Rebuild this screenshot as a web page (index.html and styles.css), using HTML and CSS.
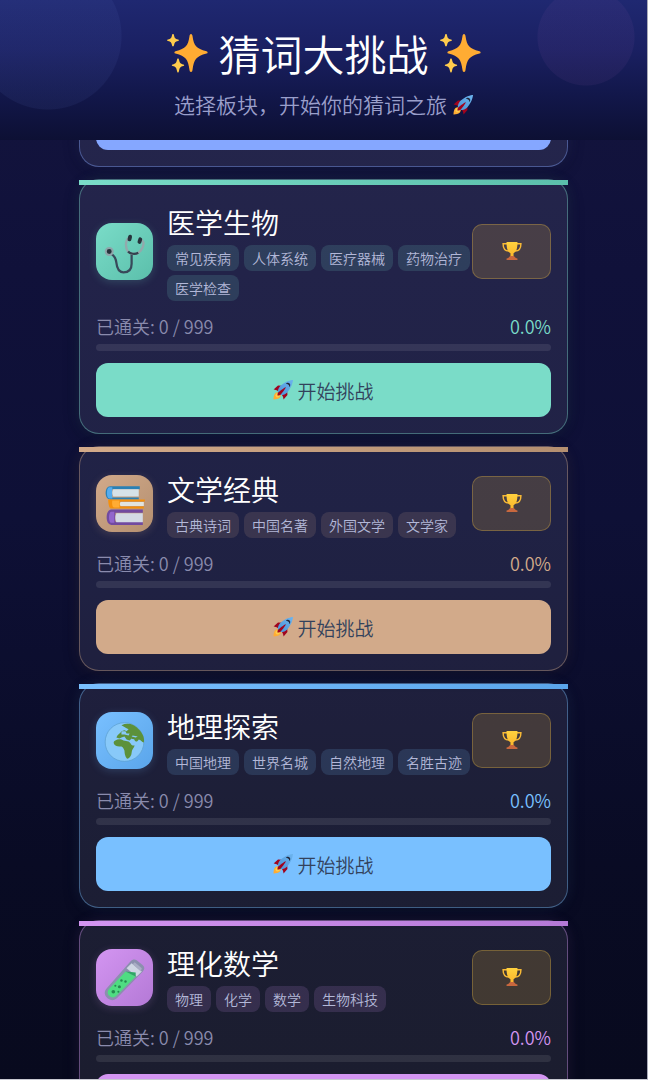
FILE: index.html
```html
<!DOCTYPE html>
<html lang="zh-CN">
<head>
<meta charset="utf-8">
<meta name="viewport" content="width=device-width, initial-scale=1">
<title>猜词大挑战</title>
<link rel="stylesheet" href="styles.css">
</head>
<body>
<svg class="sprite" aria-hidden="true">
  <defs>
    <linearGradient id="cup" x1="0" y1="0" x2="0" y2="1"><stop offset="0" stop-color="#ffd23e"/><stop offset="1" stop-color="#fbb62c"/></linearGradient>
    <linearGradient id="hull" x1="0" y1="1" x2="1" y2="0"><stop offset="0" stop-color="#4a94d8"/><stop offset="1" stop-color="#6db4ee"/></linearGradient>
    <symbol id="sparkles" viewBox="0 0 42 42">
      <path fill="#ffac33" d="M25 2c1 0 1.300 1 1.500 2 1.500 10 3.500 12.500 14 15.200 1.500.4 1.500 2 0 2.400-10.500 2.700-12.500 6-14 16.400-.2 1-.5 2-1.500 2s-1.300-1-1.500-2c-1.500-10.400-3.500-13.700-14-16.400-1.500-.4-1.500-2 0-2.400C20 16.500 22 14 23.500 4c.2-1 .5-2 1.500-2z"/>
      <path fill="#ffcc4d" d="M7 2c.6 0 .8.500 1 1.200.6 2.800 1.200 3.500 4 4.200 1.200.3 1.200 1.300 0 1.600-2.800.7-3.400 1.500-4 4.200-.2.700-.4 1.200-1 1.200s-.8-.5-1-1.200c-.6-2.700-1.200-3.500-4-4.200-1.200-.3-1.200-1.300 0-1.600 2.800-.7 3.400-1.400 4-4.200.2-.7.400-1.200 1-1.200zM12 26.500c.6 0 .8.500 1 1.300.7 3.200 1.400 4 4.300 4.700 1.200.3 1.200 1.300 0 1.600-2.900.7-3.600 1.600-4.300 4.900-.2.900-.4 1.500-1 1.500s-.8-.6-1-1.500c-.7-3.300-1.400-4.200-4.300-4.900-1.200-.3-1.200-1.300 0-1.600 2.900-.7 3.600-1.500 4.300-4.700.2-.8.400-1.300 1-1.300z"/>
    </symbol>
    <symbol id="rocket" viewBox="0 0 36 36">
      <path fill="#a0041e" d="M1 17l8-7 16 1 1 16-7 8s.001-5.999-6-12-12-6-12-6z"/>
      <path fill="#ffac33" d="M.973 35s-.036-7.979 2.985-11S15 21.187 15 21.187 14.999 29 11.999 32c-3 3-11.026 3-11.026 3z"/>
      <circle fill="#ffcc4d" cx="8.500" cy="27.500" r="4"/>
      <path fill="url(#hull)" d="M35.999 0s-10 0-22 10c-6 5-6 14-4 16s11 2 16-4c10-12 10-22 10-22z"/>
      <path fill="#23283c" d="M26.999 5c-1.623 0-3.013.971-3.641 2.360.502-.227 1.055-.36 1.641-.36 2.209 0 4 1.791 4 4 0 .586-.133 1.139-.359 1.640 1.389-.627 2.359-2.017 2.359-3.640 0-2.209-1.791-4-4-4z"/>
      <path fill="#a0041e" d="M8 28s0-4 1-5 13.001-10.999 14-10-9.001 13-10.001 14S8 28 8 28z"/>
    </symbol>
    <symbol id="trophy" viewBox="0 0 22 22">
      <path fill="none" stroke="#f7b936" stroke-width="1.600" d="M6 3H1.200c0 4.500 1 8 6.300 8M16 3h4.800c0 4.500-1 8-6.300 8"/>
      <path fill="url(#cup)" d="M5 1h12c0 7-1 10.500-4.300 12.500v3.500H9.300v-3.500C6 11.500 5 8 5 1z"/>
      <path fill="#c8683e" d="M9 16.500h4l2.200 2.300 1.800.4V21H5v-1.800l1.800-.4z"/>
    </symbol>
  </defs>
</svg>

<div class="app">
  <header class="hero">
    <h1 class="hero-title">
      <svg class="sparkle"><use href="#sparkles"/></svg>
      <span>猜词大挑战</span>
      <svg class="sparkle"><use href="#sparkles"/></svg>
    </h1>
    <p class="hero-sub"><span>选择板块，开始你的猜词之旅</span><svg class="rocket"><use href="#rocket"/></svg></p>
  </header>

  <main class="list">
    <section class="card card-scrolled">
      <button class="start" type="button" aria-label="开始挑战"></button>
    </section>

    <section class="card medical">
      <div class="card-head">
        <div class="badge">
          <svg viewBox="0 0 56 56" fill="none">
            <path stroke="#38495a" stroke-width="2.200" d="M15.500 31c3 1.500 4 4 4.500 8 .5 5 2 9.500 7 9.500 6 0 8-3.500 8-8.500V30"/>
            <path stroke="#93a9ac" stroke-width="2.200" d="M32 14.500c-3.500 3-3.500 11 .5 14.500 4 2.500 9 1.500 11.500-2 3-4 3.500-8 1-10.500"/>
            <path stroke="#34424e" stroke-width="2.200" d="M31.500 28c2 2.500 7 3 10 1.200"/>
            <path stroke="#26333b" stroke-width="3.800" stroke-linecap="round" d="M33.500 13.500l-.6 2.600M43.500 16l-.8 2.600"/>
            <circle cx="13" cy="28" r="3.400" fill="#26333b" stroke="#8fa5aa" stroke-width="2"/>
          </svg>
        </div>
        <div class="info">
          <h2>医学生物</h2>
          <ul class="tags"><li>常见疾病</li><li>人体系统</li><li>医疗器械</li><li>药物治疗</li><li>医学检查</li></ul>
        </div>
        <button class="rank" type="button" aria-label="排行榜"><svg><use href="#trophy"/></svg></button>
      </div>
      <div class="stats"><span>已通关: 0 / 999</span><span class="percent">0.0%</span></div>
      <div class="track"></div>
      <button class="start" type="button"><svg class="rocket"><use href="#rocket"/></svg>开始挑战</button>
    </section>

    <section class="card literature">
      <div class="card-head">
        <div class="badge">
          <svg viewBox="0 0 56 56">
            <path fill="#2980b5" d="M14 11h29v3H15v8h27v2H14c-6 0-6-13 0-13z"/>
            <path fill="#55acee" d="M13 12h3v11h-3c-3 0-3-11 0-11z"/>
            <path fill="#d6e2e8" d="M17 14h25v7H17q-2-3.500 0-7z"/>
            <path fill="#f4900c" d="M12 24h36v2H24v5h23v2H15c-3 0-3-9-3-9z"/>
            <path fill="#ffac33" d="M16 25h7v7h-5c-3 0-2-7-2-7z"/>
            <path fill="#e1e4df" d="M24 26.500h23v4H24q-1.500-2 0-4z"/>
            <path fill="#714aa0" d="M15 34h31v3H19v9h27v3H15c-6 0-6-15 0-15z"/>
            <path fill="#9266cc" d="M15 36h3v11h-3c-3 0-3-11 0-11z"/>
            <path fill="#d3dae5" d="M20 37.500h26v9H20q-2-4.500 0-9z"/>
          </svg>
        </div>
        <div class="info">
          <h2>文学经典</h2>
          <ul class="tags"><li>古典诗词</li><li>中国名著</li><li>外国文学</li><li>文学家</li></ul>
        </div>
        <button class="rank" type="button" aria-label="排行榜"><svg><use href="#trophy"/></svg></button>
      </div>
      <div class="stats"><span>已通关: 0 / 999</span><span class="percent">0.0%</span></div>
      <div class="track"></div>
      <button class="start" type="button"><svg class="rocket"><use href="#rocket"/></svg>开始挑战</button>
    </section>

    <section class="card geography">
      <div class="card-head">
        <div class="badge">
          <svg viewBox="0 0 56 56">
            <circle cx="28" cy="29.500" r="19" fill="#88c9f9" stroke="#5c9fcf" stroke-width=".7"/>
            <path fill="#5c913b" d="M25 13c6-3 13-1 17 4 4 4 6 9 5 13-2 0-3-3-5-3-1 2-3 3-4 1 0-2-2-1-3-2l-2 2-3-1-2-3-3 1-2 1-3-1c1-3 4-4 5-6l3-1 2 1 2-2-2-1z"/>
            <path fill="#5c913b" d="M19 28c3-2 6-1 8 0l5 1c2 1 2 3 4 4h2c-1 3-3 4-3 7 0 3-2 5-4 6-2-1-3-5-3-8-1-2-1-3-3-4-3 0-5 0-7-2-1-2-1-3 1-4z"/>
            <path fill="#88c9f9" d="M25 19h4l1 2h3l-1 2-4-1h-3zM36 23l5 1-2 1-4-1z"/>
          </svg>
        </div>
        <div class="info">
          <h2>地理探索</h2>
          <ul class="tags"><li>中国地理</li><li>世界名城</li><li>自然地理</li><li>名胜古迹</li></ul>
        </div>
        <button class="rank" type="button" aria-label="排行榜"><svg><use href="#trophy"/></svg></button>
      </div>
      <div class="stats"><span>已通关: 0 / 999</span><span class="percent">0.0%</span></div>
      <div class="track"></div>
      <button class="start" type="button"><svg class="rocket"><use href="#rocket"/></svg>开始挑战</button>
    </section>

    <section class="card science">
      <div class="card-head">
        <div class="badge">
          <svg viewBox="0 0 56 56">
            <path fill="#8b8fae" d="M34 12c2-2 4-2 6-1l6 5c2 2 2 4 0 6L21 48c-4 4-9 2-11-1-2-3-2-6 1-9z"/>
            <path fill="#cfd6e3" d="M35 14l10 8-5 5-10-8z"/>
            <path fill="#a9adc4" d="M38 13l7 6-1 3-8-7z"/>
            <path fill="#4fdc82" d="M29 22l10 5-19 19c-3 3-6 1-7.500-.5S11 41 13 39z"/>
            <path fill="#2fa864" d="M29 22l10 1v4z"/>
            <g fill="#258a50"><circle cx="17" cy="42" r="1.800"/><circle cx="23" cy="37" r="1.500"/><circle cx="19" cy="36" r="1"/><circle cx="25" cy="31" r="1.200"/><circle cx="29" cy="32" r="1.200"/><circle cx="22" cy="42" r="1"/></g>
          </svg>
        </div>
        <div class="info">
          <h2>理化数学</h2>
          <ul class="tags"><li>物理</li><li>化学</li><li>数学</li><li>生物科技</li></ul>
        </div>
        <button class="rank" type="button" aria-label="排行榜"><svg><use href="#trophy"/></svg></button>
      </div>
      <div class="stats"><span>已通关: 0 / 999</span><span class="percent">0.0%</span></div>
      <div class="track"></div>
      <button class="start" type="button" aria-label="开始挑战"></button>
    </section>
  </main>
</div>
</body>
</html>
```

FILE: styles.css
```css
* {
  box-sizing: border-box;
}

body {
  margin: 0;
  background: #c9cad2;
  font-family: "Noto Sans CJK SC", "Noto Sans", sans-serif;
  font-weight: 350;
  color: #fff;
}

h1, h2, p, ul {
  margin: 0;
  padding: 0;
  font-weight: 350;
}

button {
  font-family: inherit;
  font-weight: 350;
  cursor: pointer;
}

.sprite {
  position: absolute;
  width: 0;
  height: 0;
}

.app {
  display: flex;
  flex-direction: column;
  height: 100vh;
  overflow: hidden;
  border-right: 1px solid #a9abb8;
  border-bottom: 1px solid #c9cad2;
  background: linear-gradient(180deg, #14153f 0%, #10113a 25%, #0e1036 48%, #090b24 80%, #080a1e 100%);
}

.hero {
  display: flex;
  flex-direction: column;
  align-items: center;
  gap: 7px;
  padding: 21px 16px 22px;
  background:
    radial-gradient(circle at 48px 36px, rgba(90, 110, 190, 0.1) 73px, transparent 74px),
    radial-gradient(circle at calc(100% - 61px) 37px, rgba(130, 80, 160, 0.1) 48px, transparent 49px),
    linear-gradient(180deg, #1f2871 0%, #1a2062 35%, #12174a 68%, #0d1034 100%);
}

.hero-title {
  display: flex;
  align-items: center;
  gap: 10px;
  font-size: 42px;
  line-height: 63px;
}

.sparkle {
  width: 42px;
  height: 42px;
}

.hero-sub {
  display: flex;
  align-items: center;
  gap: 6px;
  font-size: 21px;
  line-height: 27px;
  color: #9a9fcb;
}

.rocket {
  width: 20px;
  height: 20px;
}

.list {
  display: flex;
  flex: 1;
  flex-direction: column;
  align-items: center;
  gap: 12px;
  min-height: 0;
  overflow: hidden;
}

.card {
  position: relative;
  flex: none;
  width: calc(100% - 32px);
  max-width: 489px;
  padding: 21px 16px 16px;
  border: 1px solid color-mix(in srgb, var(--accent) 40%, transparent);
  border-radius: 20px;
  background: rgba(255, 255, 255, 0.08);
  box-shadow: 0 0 14px color-mix(in srgb, var(--accent) 10%, transparent), 0 4px 16px rgba(0, 0, 20, 0.3);
}

.card::before {
  content: "";
  position: absolute;
  top: 0;
  left: -1px;
  right: -1px;
  height: 5px;
  background: linear-gradient(90deg, var(--accent), var(--accent-deep));
}

.card-scrolled {
  --accent: #85a7ff;
  --accent-deep: #6a86e0;
  margin-top: -66px;
}

.medical {
  --accent: #7adcc8;
  --accent-deep: #5bbfab;
}

.literature {
  --accent: #d2aa8a;
  --accent-deep: #b48f70;
}

.geography {
  --accent: #79c0ff;
  --accent-deep: #5aa5ea;
}

.science {
  --accent: #d395f1;
  --accent-deep: #b479d6;
}

.card-head {
  display: flex;
  align-items: center;
}

.badge {
  flex: none;
  width: 57px;
  height: 57px;
  margin-right: 14px;
  border-radius: 16px;
  background: linear-gradient(135deg, var(--accent), var(--accent-deep));
  box-shadow: 0 2px 8px color-mix(in srgb, var(--accent) 20%, transparent);
}

.badge svg {
  display: block;
  width: 100%;
  height: 100%;
}

.info {
  flex: 1;
  min-width: 0;
}

.info h2 {
  margin-bottom: 2px;
  font-size: 28px;
  line-height: 42px;
}

.tags {
  display: flex;
  flex-wrap: wrap;
  gap: 4px 5px;
  list-style: none;
}

.tags li {
  padding: 0 8px;
  border-radius: 8px;
  background: color-mix(in srgb, var(--accent) 15%, transparent);
  font-size: 14px;
  line-height: 26px;
  color: #b3b8d8;
}

.rank {
  display: flex;
  flex: none;
  align-items: center;
  justify-content: center;
  width: 79px;
  height: 55px;
  padding: 0;
  border: 1px solid rgba(255, 205, 70, 0.28);
  border-radius: 10px;
  background: rgba(255, 193, 60, 0.17);
}

.rank svg {
  width: 20px;
  height: 20px;
}

.stats {
  display: flex;
  justify-content: space-between;
  margin-top: 12px;
  font-size: 18px;
  line-height: 27px;
  color: #8a8bad;
}

.percent {
  color: var(--accent);
}

.track {
  height: 7px;
  margin: 4px 0 12px;
  border-radius: 4px;
  background: rgba(255, 255, 255, 0.09);
}

.start {
  display: flex;
  align-items: center;
  justify-content: center;
  gap: 4px;
  width: 100%;
  height: 54px;
  padding: 0;
  border: 0;
  border-radius: 12px;
  background: var(--accent);
  font-size: 19px;
  color: #33425c;
}
```
